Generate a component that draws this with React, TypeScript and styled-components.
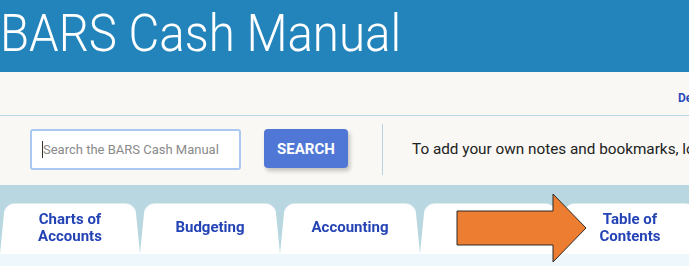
import styled, { createGlobalStyle } from "styled-components";

const GlobalStyle = createGlobalStyle`
  html, body {
    margin: 0;
    padding: 0;
    overflow: hidden;
    background: #f9f8f4;
    font-family: Roboto, "Liberation Sans", sans-serif;
  }
`;

const Page = styled.div`
  width: 689px;
  height: 266px;
  overflow: hidden;
  position: relative;
`;

const Banner = styled.header`
  height: 72px;
  background: #2384bb;
  display: flex;
  align-items: center;
  padding-left: 0;
`;

const Title = styled.h1`
  margin: -4px 0 0 0;
  font-weight: 300;
  font-size: 52px;
  line-height: 1;
  color: #ffffff;
  white-space: nowrap;
  transform: scaleX(0.912);
  transform-origin: left center;
`;

const UtilityBar = styled.div`
  height: 43px;
  background: #f9f8f4;
  border-bottom: 1px solid #b9d6e4;
  display: flex;
  align-items: center;
  padding-left: 678px;
  white-space: nowrap;
`;

const UtilityLink = styled.a`
  font-size: 12px;
  font-weight: 700;
  color: #2b4bbd;
  text-decoration: none;
  margin-top: 8px;
`;

const SearchBar = styled.div`
  height: 69px;
  background: #f9f8f4;
  display: flex;
  align-items: flex-start;
  padding-left: 30px;
  box-sizing: border-box;
  white-space: nowrap;
  & > * {
    flex-shrink: 0;
  }
`;

const InputWrap = styled.div`
  position: relative;
  margin-top: 13px;
`;

const SearchInput = styled.input`
  width: 211px;
  height: 41px;
  box-sizing: border-box;
  border: 2px solid #a9c8f2;
  border-radius: 3px;
  background: #ffffff;
  padding: 0 0 0 11px;
  font-family: Roboto, "Liberation Sans", sans-serif;
  font-size: 13px;
  outline: none;
  &::placeholder {
    color: #8a8a8a;
  }
`;

const Caret = styled.span`
  position: absolute;
  left: 12px;
  top: 12px;
  width: 1px;
  height: 17px;
  background: #333;
`;

const SearchButton = styled.button`
  margin: 13px 0 0 23px;
  width: 84px;
  height: 39px;
  border: none;
  border-radius: 4px;
  background: #5177d6;
  color: #ffffff;
  font-family: Roboto, "Liberation Sans", sans-serif;
  font-weight: 700;
  font-size: 15px;
  box-shadow: 2px 3px 4px rgba(0, 0, 0, 0.22);
`;

const Divider = styled.div`
  width: 1px;
  height: 51px;
  background: #b7d3e0;
  margin: 8px 0 0 34px;
`;

const Notice = styled.p`
  margin: 24px 0 0 29px;
  font-size: 15.3px;
  color: #222;
`;

const TabBand = styled.nav`
  background: #b9d7e1;
  padding-top: 18px;
  display: flex;
  white-space: nowrap;
`;

const Tab = styled.div`
  position: relative;
  isolation: isolate;
  flex: 0 0 140px;
  height: 51px;
  display: flex;
  align-items: center;
  justify-content: center;
  text-align: center;
  font-weight: 700;
  font-size: 15px;
  line-height: 17px;
  color: #2443b5;
  padding-bottom: 2px;
  box-sizing: border-box;
  &::before {
    content: "";
    position: absolute;
    left: 0;
    right: 0;
    bottom: 0;
    top: -4px;
    background: #ffffff;
    border-radius: 11px 11px 0 0;
    transform: perspective(100px) rotateX(8deg);
    transform-origin: bottom;
    z-index: -1;
  }
`;

const BottomStrip = styled.div`
  height: 12px;
  background: #eef7fb;
`;

const Arrow = styled.svg`
  position: absolute;
  left: 456px;
  top: 193px;
`;

const tabs = ["Charts of\nAccounts", "Budgeting", "Accounting", "", "Table of\nContents"];

export default function App() {
  return (
    <Page>
      <GlobalStyle />
      <Banner>
        <Title>BARS Cash Manual</Title>
      </Banner>
      <UtilityBar>
        <UtilityLink>Definitions</UtilityLink>
      </UtilityBar>
      <SearchBar>
        <InputWrap>
          <SearchInput placeholder="Search the BARS Cash Manual" />
          <Caret />
        </InputWrap>
        <SearchButton>SEARCH</SearchButton>
        <Divider />
        <Notice>To add your own notes and bookmarks, log in</Notice>
      </SearchBar>
      <TabBand>
        {tabs.map((t, i) => (
          <Tab key={i}>
            <span>
              {t.split("\n").map((line, j) => (
                <div key={j}>{line}</div>
              ))}
            </span>
          </Tab>
        ))}
      </TabBand>
      <BottomStrip />
      <Arrow width="132" height="70" viewBox="456 193 132 70">
        <polygon
          points="457,211 553,211 553,194 586,228 553,262 553,245 457,245"
          fill="#ed7d31"
          stroke="#2a2a2a"
          strokeWidth="1"
        />
      </Arrow>
    </Page>
  );
}
